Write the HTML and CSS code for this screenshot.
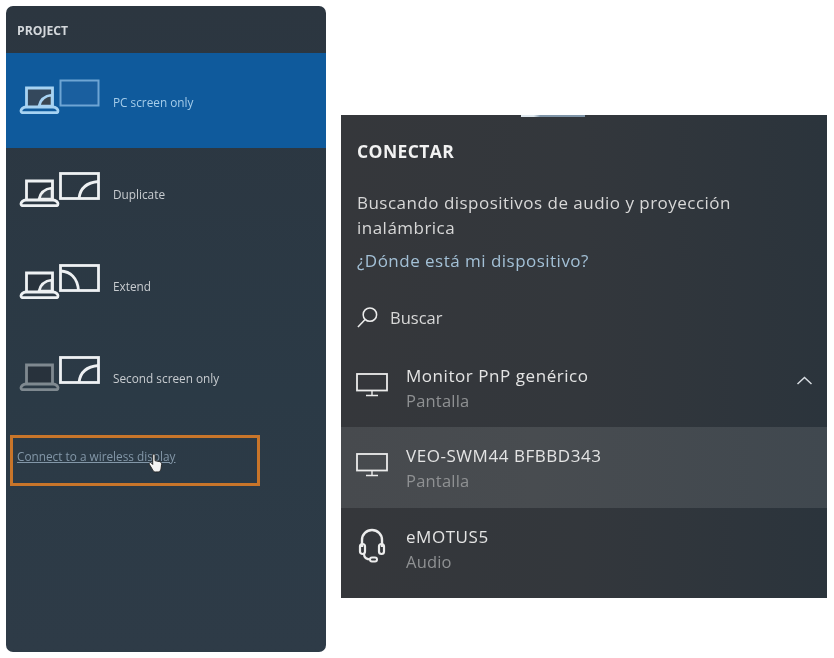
FILE: index.html
```html
<!DOCTYPE html>
<html lang="es">
<head>
<meta charset="utf-8">
<title>Project / Conectar</title>
<link rel="stylesheet" href="styles.css">
</head>
<body>
<svg class="defs" width="0" height="0" aria-hidden="true">
  <defs>
    <symbol id="laptop" viewBox="0 0 42 28">
      <path class="lap-screen" d="M7.500 21V2h26v19" stroke="currentColor" stroke-width="2.800"/>
      <path d="M2 24.800c0-1.500 2-3.800 5-3.800h27c3 0 5 2.300 5 3.800 0 1.200-.6 1.900-1.600 1.900H3.600c-1 0-1.600-.7-1.600-1.900z" fill="none" stroke="currentColor" stroke-width="2.800"/>
    </symbol>
    <symbol id="arc" viewBox="0 0 42 28">
      <path d="M20 20c1-5 5-10 13-11v11z" fill="#3a4650" stroke="currentColor" stroke-width="2.600"/>
    </symbol>
    <symbol id="monitor-dup" viewBox="0 0 41 28">
      <rect x="1.500" y="1.500" width="38" height="25" fill="none" stroke="currentColor" stroke-width="2.800"/>
      <path d="M20 26.500c1-10 8-16 19.500-17" fill="none" stroke="currentColor" stroke-width="2.800"/>
    </symbol>
    <symbol id="monitor-ext" viewBox="0 0 41 28">
      <rect x="1.500" y="1.500" width="38" height="25" fill="none" stroke="currentColor" stroke-width="2.800"/>
      <path d="M1.500 7c10 .5 17 7 18 19.500" fill="none" stroke="currentColor" stroke-width="2.800"/>
    </symbol>
    <symbol id="monitor-off" viewBox="0 0 41 28">
      <rect x="1.500" y="1.500" width="38" height="25" fill="#1a5f9f" stroke="currentColor" stroke-width="2"/>
    </symbol>
    <symbol id="desk" viewBox="0 0 32 24">
      <rect x="1" y="1" width="30" height="16.500" fill="none" stroke="currentColor" stroke-width="1.800"/>
      <path d="M16 18v4M10 22.500h12" fill="none" stroke="currentColor" stroke-width="1.400"/>
    </symbol>
  </defs>
</svg>
<div class="page">
  <section class="project">
    <h2 class="project-title">PROJECT</h2>
    <div class="mode mode-active">
      <span class="pair pair-active">
        <svg class="lap"><use href="#laptop"/></svg>
        <svg class="lap-arc"><use href="#arc"/></svg>
        <svg class="mon"><use href="#monitor-off"/></svg>
      </span>
      <span class="mode-label">PC screen only</span>
    </div>
    <div class="mode">
      <span class="pair">
        <svg class="lap"><use href="#laptop"/></svg>
        <svg class="lap-arc"><use href="#arc"/></svg>
        <svg class="mon"><use href="#monitor-dup"/></svg>
      </span>
      <span class="mode-label">Duplicate</span>
    </div>
    <div class="mode">
      <span class="pair">
        <svg class="lap"><use href="#laptop"/></svg>
        <svg class="lap-arc"><use href="#arc"/></svg>
        <svg class="mon"><use href="#monitor-ext"/></svg>
      </span>
      <span class="mode-label">Extend</span>
    </div>
    <div class="mode">
      <span class="pair">
        <svg class="lap lap-dim"><use href="#laptop"/></svg>
        <svg class="mon"><use href="#monitor-dup"/></svg>
      </span>
      <span class="mode-label">Second screen only</span>
    </div>
    <div class="connect-box">
      <a class="connect-link">Connect to a wireless display</a>
      <svg class="hand" viewBox="0 0 16 22" aria-hidden="true">
        <path d="M5 2c0-1.500 2.500-1.500 2.500 0v6l5 1c1.500.5 2 1.500 2 3l-.5 4c-.3 2-1.500 4-3 4H8c-1.500 0-2.500-1-3.500-3L1.500 12c-.8-1.500 1-2.800 2.200-1.500L5 12z" fill="#f4f4f4" stroke="#222" stroke-width="1"/>
      </svg>
    </div>
  </section>

  <section class="connect">
    <span class="top-glitch"></span>
    <h2 class="connect-title">CONECTAR</h2>
    <p class="connect-text">Buscando dispositivos de audio y proyección inalámbrica</p>
    <a class="where">¿Dónde está mi dispositivo?</a>
    <div class="search">
      <svg class="search-icon" viewBox="0 0 24 24" aria-hidden="true">
        <circle cx="14.500" cy="9" r="7" fill="none" stroke="currentColor" stroke-width="1.600"/>
        <path d="M9.500 14 2 22" fill="none" stroke="currentColor" stroke-width="1.600"/>
      </svg>
      <span>Buscar</span>
    </div>
    <div class="device device-first">
      <svg class="device-icon"><use href="#desk"/></svg>
      <div class="device-text"><div class="device-name">Monitor PnP genérico</div><div class="device-type">Pantalla</div></div>
      <svg class="chevron" viewBox="0 0 16 9" aria-hidden="true"><path d="M1 8l7-6.500L15 8" fill="none" stroke="currentColor" stroke-width="1.500"/></svg>
    </div>
    <div class="device device-hover">
      <svg class="device-icon"><use href="#desk"/></svg>
      <div class="device-text"><div class="device-name">VEO-SWM44 BFBBD343</div><div class="device-type">Pantalla</div></div>
    </div>
    <div class="device device-last">
      <svg class="device-icon headset" viewBox="0 0 28 36" aria-hidden="true">
        <path d="M4 20V13a10 10 0 0 1 20 0v7" fill="none" stroke="currentColor" stroke-width="2.400"/>
        <rect x="2" y="17" width="5" height="10" rx="2.500" fill="none" stroke="currentColor" stroke-width="2.200"/>
        <rect x="21" y="17" width="5" height="10" rx="2.500" fill="none" stroke="currentColor" stroke-width="2.200"/>
        <path d="M6 27c0 4 3 5.500 7 5.500" fill="none" stroke="currentColor" stroke-width="2.200"/>
        <rect x="12" y="30.500" width="7" height="4" rx="2" fill="none" stroke="currentColor" stroke-width="2"/>
      </svg>
      <div class="device-text"><div class="device-name">eMOTUS5</div><div class="device-type">Audio</div></div>
    </div>
  </section>
</div>
</body>
</html>
```
FILE: styles.css
```css
* { box-sizing: border-box; }
html, body { margin: 0; padding: 0; background: #fff; }
body { width: 834px; height: 658px; overflow: hidden; font-family: "Open Sans", "Noto Sans", sans-serif; }
.defs { position: absolute; }
.page { display: flex; align-items: flex-start; gap: 15px; padding: 6px 0 0 6px; }

/* Project panel */
.project { width: 320px; height: 646px; border-radius: 7px; background: linear-gradient(180deg, #2c3640 0%, #2b3a46 60%, #2e3b47 100%); display: flex; flex-direction: column; flex: none; filter: blur(0.6px); }
.project-title { margin: 0; height: 47px; padding: 18px 0 0 11px; font-size: 12.200px; line-height: 14px; font-weight: 700; color: #d4d8dc; }
.mode { height: 92px; display: flex; align-items: flex-start; padding: 24px 0 0 13px; color: #eef1f3; --screen: #28323c; }
.mode-active { height: 95px; padding-top: 26px; background: #0f5a9c; color: #a7d3f2; --screen: #34485c; }
.lap-screen { fill: var(--screen); }
.pair { position: relative; width: 81px; height: 36px; flex: none; display: block; }
.lap { position: absolute; left: 0; top: 7px; width: 42px; height: 28px; }
.lap-dim { color: #7f8990; }
.lap-arc { position: absolute; left: 0; top: 7px; width: 42px; height: 28px; }
.mon { position: absolute; left: 40px; top: 0; width: 41px; height: 28px; }
.pair-active .mon { color: #6ea5d4; }
.mode-label { margin: 14px 0 0 13px; font-size: 11.800px; line-height: 16px; color: #c8ccd0; }
.mode-active .mode-label { margin-top: 15px; color: #a5cdea; }
.connect-box { position: relative; margin: 11px 0 0 4px; width: 250px; height: 51px; border: 3px solid #c8752a; padding: 10px 0 0 4px; }
.connect-link { font-size: 11.800px; line-height: 16px; color: #8397a8; text-decoration: underline; white-space: nowrap; display: block; }
.hand { position: absolute; left: 135px; top: 15px; width: 15px; height: 21px; }

/* Connect panel */
.connect { position: relative; width: 486px; height: 483px; margin-top: 109px; flex: none; background: linear-gradient(90deg, #35373b 0%, #33373c 50%, #2b343c 100%); color: #f0f0f0; display: flex; flex-direction: column; filter: blur(0.4px); }
.top-glitch { position: absolute; left: 180px; top: 0; width: 64px; height: 2px; background: linear-gradient(90deg, #dfe8ee 0 20%, #7f95a8 30% 100%); }
.connect-title { margin: 0; padding: 26px 0 0 16px; font-size: 17.500px; line-height: 21px; font-weight: 700; letter-spacing: 0.4px; color: #f2f2f2; white-space: nowrap; }
.connect-text { margin: 0; padding: 28px 60px 0 16px; font-size: 17px; line-height: 25px; letter-spacing: 0.48px; color: #d8d8d8; height: 79px; }
.where { padding: 9px 0 0 16px; font-size: 17px; line-height: 21px; letter-spacing: 0.48px; color: #a3c0d6; }
.search { display: flex; align-items: center; gap: 11px; padding: 17px 0 0 15px; font-size: 16.500px; line-height: 21px; color: #d8d8d8; height: 76px; }
.search-icon { width: 23px; height: 23px; color: #ececec; }
.device { display: flex; align-items: flex-start; padding: 0 0 0 15px; position: relative; }
.device-first { height: 81px; padding-top: 18px; }
.device-hover { height: 81px; padding-top: 18px; background: linear-gradient(90deg, #474a4e 0%, #484c50 40%, #40484f 100%); }
.device-last { height: 90px; padding-top: 18px; }
.device-icon { width: 32px; height: 24px; color: #ececec; flex: none; margin-top: 8px; }
.headset { width: 28px; height: 36px; margin: 1px 0 0 2px; }
.device-text { margin-left: 18px; }
.headset + .device-text { margin-left: 20px; }
.device-name { font-size: 17px; line-height: 22px; letter-spacing: 0.55px; color: #e4e4e4; white-space: nowrap; }
.device-type { font-size: 16.500px; line-height: 21px; margin-top: 3px; letter-spacing: 0.2px; color: #8f9193; }
.chevron { position: absolute; right: 14px; top: 29px; width: 17px; height: 9px; color: #d8dde2; }
```
